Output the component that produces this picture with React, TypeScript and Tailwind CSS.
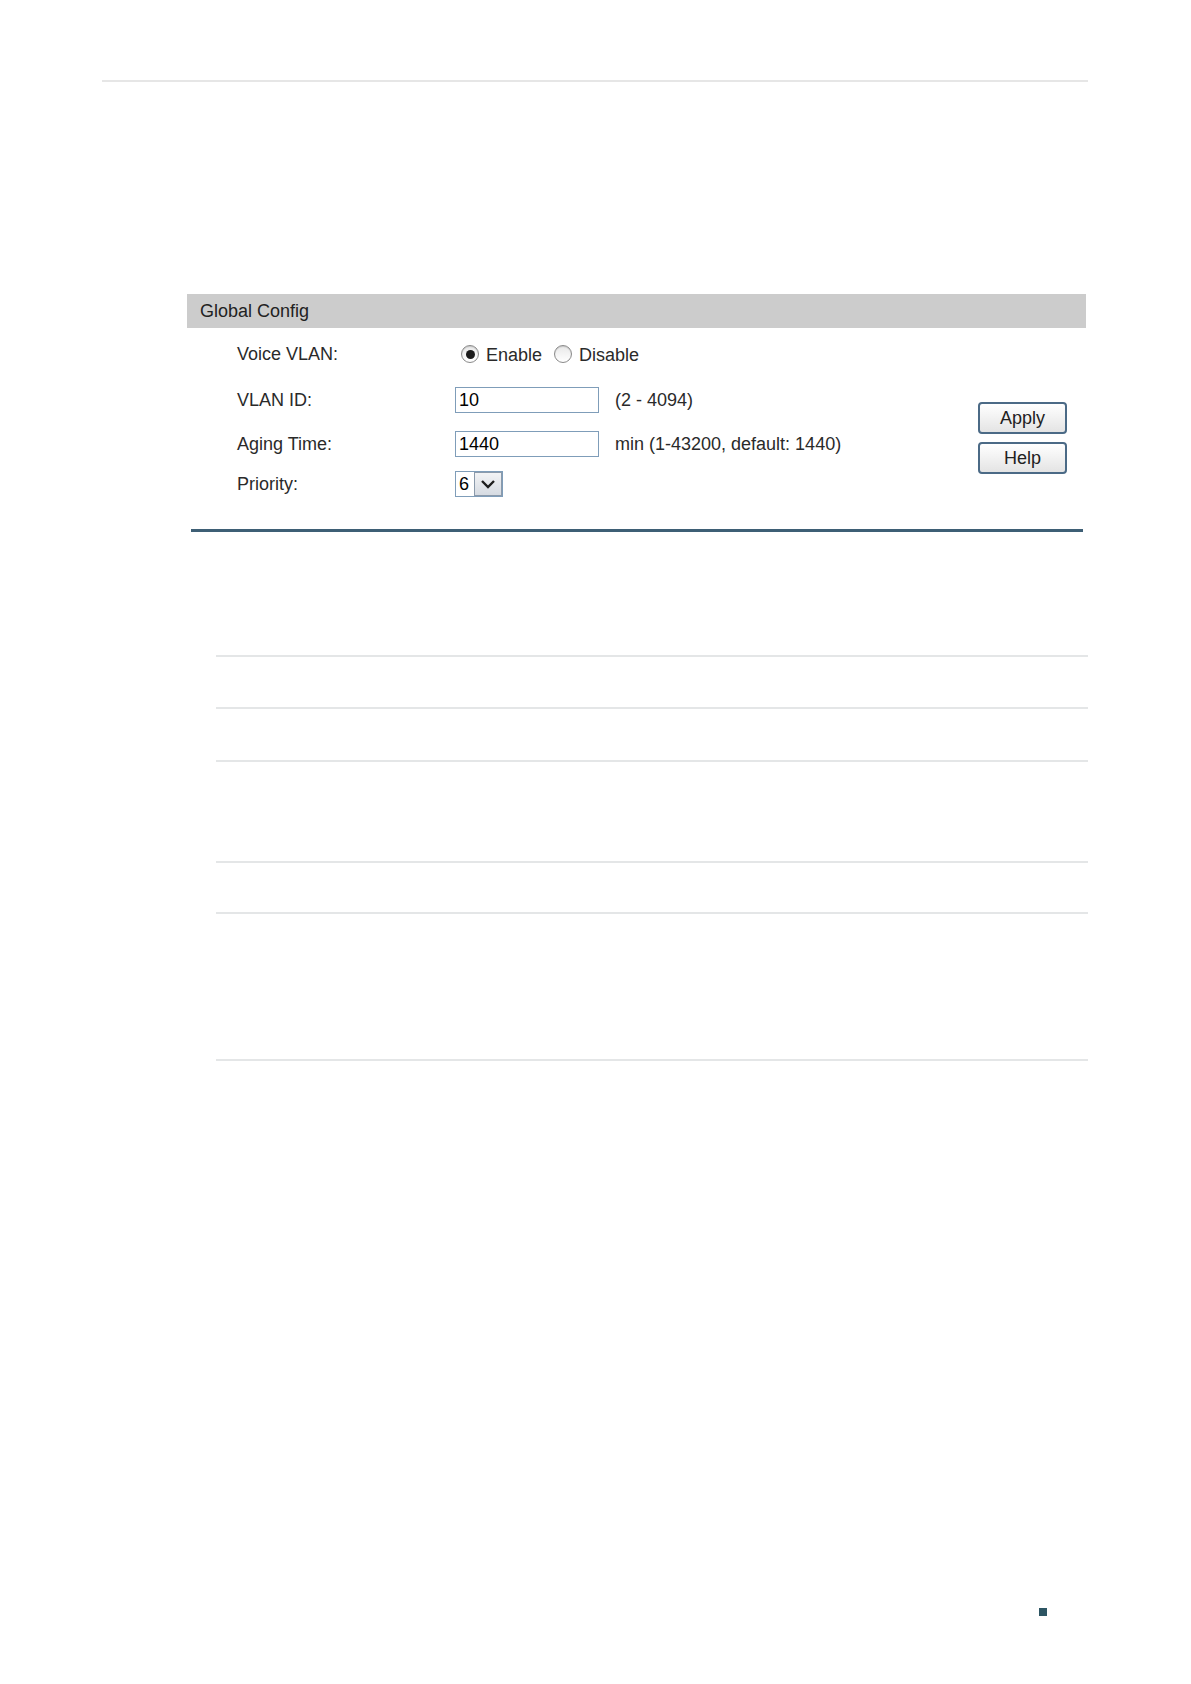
import React from 'react';

function Radio({ checked, label }: { checked?: boolean; label: string }) {
    return (
        <label className="flex items-center gap-[7px]">
            <span className="w-[18px] h-[18px] rounded-full border border-[#8a8a8a] bg-gradient-to-b from-[#e8e8e8] to-white flex items-center justify-center shadow-[inset_0_1px_1px_rgba(0,0,0,0.15)]">
                {checked && <span className="w-[9px] h-[9px] rounded-full bg-[#1a1a1a]" />}
            </span>
            <span className="mt-[3px]">{label}</span>
        </label>
    );
}

function TextBox({ value }: { value: string }) {
    return (
        <div className="w-[144px] h-[26px] border border-[#7f9db9] bg-white flex items-center pl-[3px] text-black">
            {value}
        </div>
    );
}

function Button({ label }: { label: string }) {
    return (
        <button className="w-[89px] h-[32px] rounded-[4px] border-2 border-[#4b6a86] bg-gradient-to-b from-white to-[#e4e4e4] text-[18px] text-[#222] flex items-center justify-center">
            {label}
        </button>
    );
}

function Row({ label, top, children }: { label: string; top: string; children: React.ReactNode }) {
    return (
        <div className={`flex items-center h-[34px] ${top}`}>
            <div className="w-[218px]">{label}</div>
            <div className="flex items-center">{children}</div>
        </div>
    );
}

export default function App() {
    return (
        <div className="w-[1191px] h-[1684px] bg-white font-['Liberation_Sans',Arial,sans-serif] text-[18px] text-[#2a2a2a] overflow-hidden">
            {/* top rule */}
            <div className="pt-[80px] pl-[102px]">
                <div className="w-[986px] h-[2px] bg-[#e6e6e6]" />
            </div>

            {/* Global Config panel */}
            <div className="mt-[212px] ml-[187px] w-[899px]">
                <div className="h-[34px] bg-[#cccccc] flex items-center pl-[13px] text-[#222]">Global Config</div>
                <div className="h-[201px] flex">
                    <div className="flex-1 pl-[50px]">
                        <Row label="Voice VLAN:" top="mt-[9px]">
                            <div className="flex items-center gap-[12px] ml-[6px]">
                                <Radio checked label="Enable" />
                                <Radio label="Disable" />
                            </div>
                        </Row>
                        <Row label="VLAN ID:" top="mt-[12px]">
                            <TextBox value="10" />
                            <span className="ml-[16px]">(2 - 4094)</span>
                        </Row>
                        <Row label="Aging Time:" top="mt-[10px]">
                            <TextBox value="1440" />
                            <span className="ml-[16px]">min (1-43200, default: 1440)</span>
                        </Row>
                        <Row label="Priority:" top="mt-[6px]">
                            <div className="w-[48px] h-[26px] border border-[#7f9db9] bg-white flex">
                                <span className="w-[18px] pl-[3px] flex items-center text-black">6</span>
                                <span className="flex-1 border border-[#8b9aab] bg-gradient-to-b from-[#f2f3f5] to-[#d6dbe2] flex items-center justify-center">
                                    <svg width="16" height="11" viewBox="0 0 16 11">
                                        <polyline points="2,2 8,8 14,2" fill="none" stroke="#1e1e1e" strokeWidth="2.4" />
                                    </svg>
                                </span>
                            </div>
                        </Row>
                    </div>
                    <div className="pt-[74px] pr-[19px] flex flex-col gap-[8px]">
                        <Button label="Apply" />
                        <Button label="Help" />
                    </div>
                </div>
                <div className="ml-[4px] w-[892px] h-[3px] bg-[#3e5f75]" />
            </div>

            {/* table rules */}
            <div className="ml-[216px] w-[872px]">
                <div className="mt-[123px] h-[2px] bg-[#e4e6e7]" />
                <div className="mt-[50px] h-[2px] bg-[#e4e6e7]" />
                <div className="mt-[51px] h-[2px] bg-[#e4e6e7]" />
                <div className="mt-[99px] h-[2px] bg-[#e4e6e7]" />
                <div className="mt-[49px] h-[2px] bg-[#e4e6e7]" />
                <div className="mt-[145px] h-[2px] bg-[#e4e6e7]" />
            </div>

            {/* page marker */}
            <div className="mt-[547px] ml-[1039px] w-[8px] h-[8px] bg-[#2d5563]" />
        </div>
    );
}
